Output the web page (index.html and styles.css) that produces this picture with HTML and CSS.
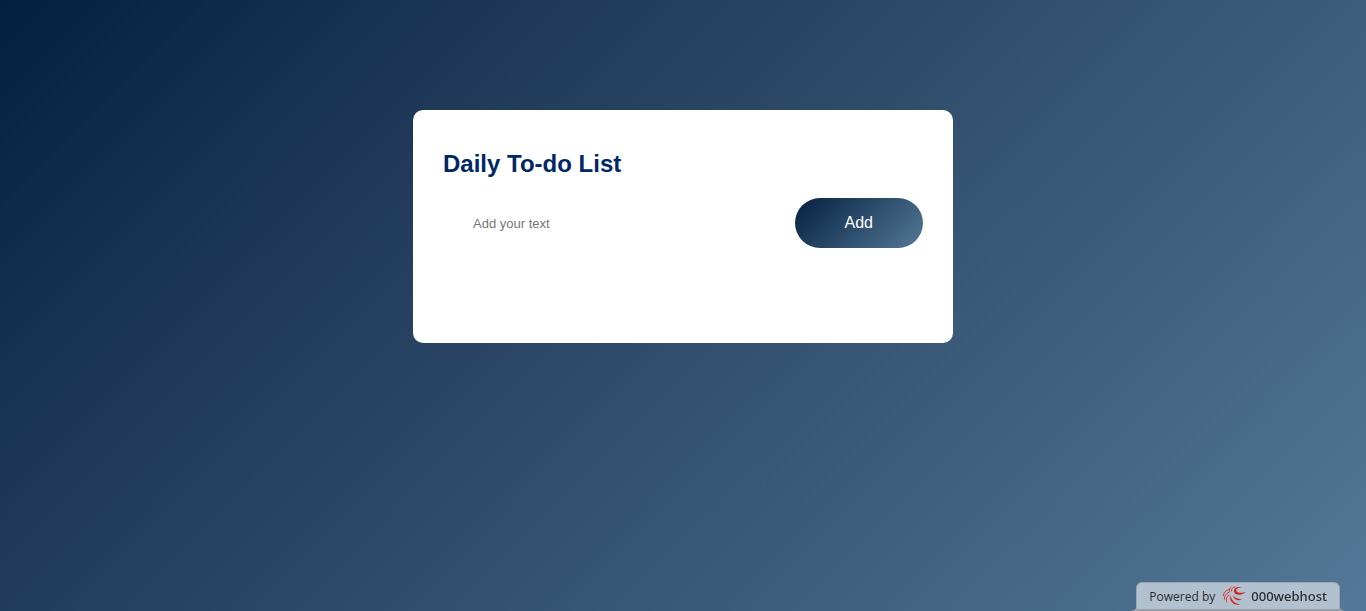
FILE: index.html
```html
<!DOCTYPE html>
<html lang="en">
<head>
<meta charset="utf-8">
<meta name="viewport" content="width=device-width, initial-scale=1">
<title>Daily To-do List</title>
<link rel="stylesheet" href="styles.css">
</head>
<body>
<main class="container">
  <section class="todo-app">
    <h2 class="title">Daily To-do List</h2>
    <form class="row">
      <input class="task-input" type="text" placeholder="Add your text" aria-label="Add your text">
      <button class="add-button" type="button">Add</button>
    </form>
    <ul class="task-list"></ul>
  </section>
</main>
<a class="host-badge" href="#">
  <span class="powered">Powered by</span>
  <svg class="host-logo" viewBox="0 0 24 20" aria-hidden="true">
    <g fill="#dc2015">
      <path d="M19.500 1.600C15.500 0 11.500 2.500 12 5.500C12.600 9.300 19.500 10.200 24 5.800C20.500 7.200 15.500 7.200 14.300 4.900C13.600 3 16 1.700 19.500 1.600Z"/>
      <path d="M8.500 9.500C6.800 13.500 10.500 19.800 17.500 18.700C17.800 18.300 17.500 17.900 17 17.900C12.800 17.600 9.500 14.500 8.500 9.500Z"/>
      <path d="M11 9.500C11.500 13.400 16 15.600 20 13.200C16.500 13.300 13.500 12.300 11 9.500Z"/>
    </g>
    <g fill="none" stroke="#dd3930" stroke-linecap="round">
      <path d="M9.300 5C9.300 2.800 10.500 1.200 13 1"/>
      <path d="M7.500 5.200C7 3.500 7.600 2.200 9 1.500"/>
      <path d="M1.300 9.700C1.500 6.500 3.600 4.300 6.500 3.700"/>
      <path d="M2.400 13.200C2.200 9.800 3.800 7.300 7 6.300"/>
      <path d="M4.600 16C3.800 13 4.600 10.400 7 8.800"/>
    </g>
  </svg>
  <span class="host-name">000webhost</span>
</a>
</body>
</html>
```
FILE: styles.css
```css
* {
  box-sizing: border-box;
  margin: 0;
  padding: 0;
}

body {
  font-family: "Liberation Sans", Arial, sans-serif;
}

.container {
  width: 100%;
  min-height: 100vh;
  padding: 10px;
  background: linear-gradient(135deg, #04203f, #203958 28%, #547897);
}

.todo-app {
  width: 100%;
  max-width: 540px;
  margin: 100px auto 20px;
  padding: 40px 30px 70px;
  border-radius: 10px;
  background: #fff;
}

.title {
  margin-bottom: 20px;
  color: #002765;
  font-size: 24px;
  line-height: 28px;
}

.row {
  display: flex;
  align-items: center;
  justify-content: space-between;
  margin-bottom: 25px;
  padding-left: 20px;
}

.task-input {
  flex: 1;
  min-width: 0;
  padding: 10px;
  border: 0;
  outline: 0;
  background: transparent;
  font: 13px "Liberation Sans", Arial, sans-serif;
}

.task-input::placeholder {
  color: #757575;
}

.add-button {
  padding: 16px 50px;
  border: 0;
  border-radius: 40px;
  background: linear-gradient(135deg, #051f3f, #547897);
  color: #fff;
  font: 16px/18px "Liberation Sans", Arial, sans-serif;
  cursor: pointer;
}

.task-list {
  list-style: none;
}

.host-badge {
  position: fixed;
  right: 26px;
  bottom: 0;
  display: flex;
  align-items: center;
  height: 29px;
  padding: 0 12px;
  border: 1px solid #98a6b2;
  border-bottom: 2px solid #929da7;
  border-radius: 6px 6px 0 0;
  background: #b1c1d0;
  color: #2b2b2b;
  font-family: "Open Sans", sans-serif;
  font-size: 12px;
  text-decoration: none;
  white-space: nowrap;
}

.host-badge::before,
.host-badge::after {
  content: "";
  position: absolute;
  bottom: -2px;
  width: 5px;
  height: 5px;
}

.host-badge::before {
  right: 100%;
  background: radial-gradient(circle at 0 0, transparent 4px, #98a6b2 5px);
}

.host-badge::after {
  left: 100%;
  background: radial-gradient(circle at 100% 0, transparent 4px, #98a6b2 5px);
}

.host-logo {
  width: 24px;
  height: 20px;
  margin: 0 5px 0 7px;
}

.host-name {
  font-family: "Noto Sans", sans-serif;
  font-size: 13px;
  font-weight: 500;
}
```
